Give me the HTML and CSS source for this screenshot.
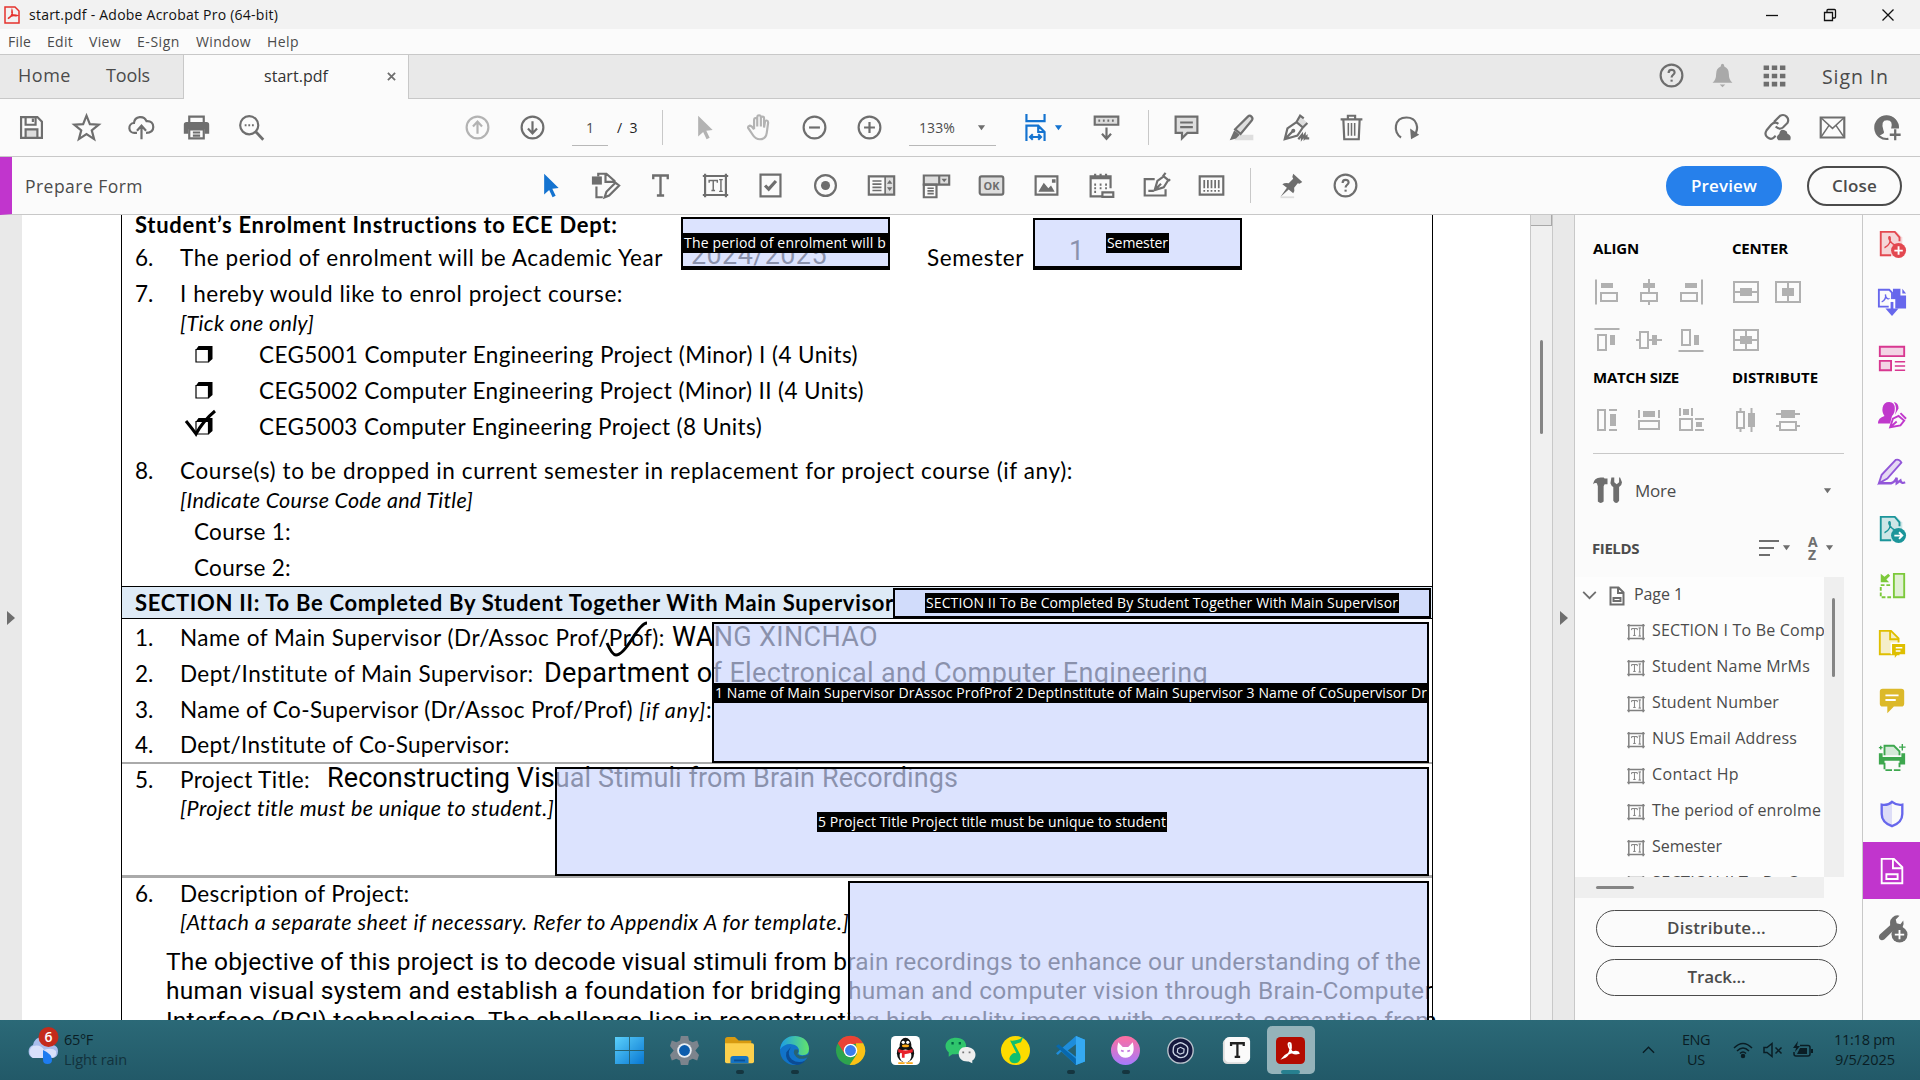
FILE: index.html
```html
<!DOCTYPE html>
<html lang="en">
<head>
<meta charset="utf-8">
<title>start.pdf - Adobe Acrobat Pro (64-bit)</title>
<link rel="stylesheet" href="styles.css">
</head>
<body>
<svg class="sprite" aria-hidden="true">
  <symbol id="help" viewBox="0 0 32 32"><circle cx="16" cy="16" r="12"/><path d="M12.8 13.2c0-4.600 6.600-4.400 6.600-.6 0 2.600-3.300 2.600-3.300 5.600"/><path d="M16.100 20.600v2.200"/></symbol>
  <symbol id="cursor" viewBox="0 0 32 32"><path class="f" d="M9 3v23l5.500-5 3.800 8 3.400-1.600-3.700-7.700 7-.9z"/></symbol>
  <symbol id="caret" viewBox="0 0 10 10"><path class="f" d="M1 2.500h8L5 8z"/></symbol>
  <symbol id="field" viewBox="0 0 32 32"><path d="M4.500 5.500h23v21h-23z"/><path d="M2 5.500h2m24 0h2M2 26.500h2m24 0h2M4.500 3v2m23-2v2m-23 22v2m23-2v2" /><path d="M9 13v-2.500h9V13m-4.500-2.500v11m-2 0h4M20 9.500h4m-4 13h4m-2-13v13" stroke-width="1.600"/></symbol>
  <symbol id="formpage" viewBox="0 0 32 32"><path d="M5 3h13l9 9v17H5z"/><path d="M17 3v10h10"/><path d="M10 19.500h12v5H10z"/></symbol>
  <symbol id="pdf" viewBox="0 0 32 32"><path class="t" d="M4 3h17l6 6v20H4z"/><path d="M24 13V9l-5-6H4v25h11"/><path stroke-width="1.500" d="M8 20c5-2 7-7 6-11-1-2-2 0-1 2 2 4 4 6 8 6"/></symbol>
</svg>

<header class="titlebar">
  <svg class="app" viewBox="0 0 16 19"><path d="M1 1.500h10l4 4v12H1z"/><path d="M4 13c3-1 5-5 4-8-1 4 2 6 5 5-3-1-6 0-9 3z"/></svg>
  <span data-w="249">start.pdf - Adobe Acrobat Pro (64-bit)</span>
  <div class="winbtns">
    <svg viewBox="0 0 14 14"><path d="M1 7.500h12"/></svg>
    <svg viewBox="0 0 14 14"><path d="M1.500 4.500h8v8h-8zM4 4V2.500q0-1 1-1h6.500q1 0 1 1V9q0 1-1 1H10"/></svg>
    <svg viewBox="0 0 14 14"><path d="M1.500 1.500l11 11m0-11l-11 11"/></svg>
  </div>
</header>
<nav class="menubar"><span data-w="23">File</span><span data-w="26">Edit</span><span data-w="32">View</span><span data-w="43">E-Sign</span><span data-w="55">Window</span><span data-w="32">Help</span></nav>

<div class="tabs">
  <div class="hometabs"><span data-w="53">Home</span><span data-w="44">Tools</span></div>
  <div class="tab"><span data-w="64">start.pdf</span><svg viewBox="0 0 10 10"><path d="M1 1l8 8m0-8L1 9"/></svg></div>
  <div class="account">
    <svg class="ic"><use href="#help"/></svg>
    <svg class="ic bell" viewBox="0 0 32 32"><path class="f" d="M16 3q2 0 2 3 5 2 5 8 0 7 4 10H5q4-3 4-10 0-6 5-8 0-3 2-3zM13 26h6l-3 3z"/></svg>
    <svg class="ic" viewBox="0 0 32 32"><path class="f" d="M4 5h6v5H4zm9 0h6v5h-6zm9 0h6v5h-6zM4 14h6v5H4zm9 0h6v5h-6zm9 0h6v5h-6zM4 23h6v5H4zm9 0h6v5h-6zm9 0h6v5h-6z"/></svg>
    <span data-w="67">Sign In</span>
  </div>
</div>

<div class="toolbar">
  <div class="group files">
    <svg class="ic" viewBox="0 0 32 32"><path d="M4.500 4.500h18l5 5v18h-23z"/><path d="M9.500 5v8h11V5m-3 1v4"/><path class="t s" d="M9.500 27v-9h13v9"/></svg>
    <svg class="ic" viewBox="0 0 32 32"><path d="M16 3l3.700 9.300 9.800.5-7.700 6.300 2.600 9.700L16 23.300l-8.400 5.500 2.600-9.700-7.700-6.300 9.800-.5z"/></svg>
    <svg class="ic" viewBox="0 0 32 32"><path d="M11 22H8.500a5.500 5.500 0 0 1-.8-11C8.500 3 19 2.500 21.500 9c5-.5 7.500 2.500 7.500 6.500S26 22 21 22M16 29V14m-5 5.500l5-5.500 5 5.500"/></svg>
    <svg class="ic" viewBox="0 0 32 32"><path d="M8 10V4h16v6"/><path class="f" d="M5 10h22q3 0 3 3v10h-5v-5H7v5H2V13q0-3 3-3z"/><path d="M8 18h16v10H8zM12 21.500h8m-8 3.500h8"/></svg>
    <svg class="ic" viewBox="0 0 32 32"><circle cx="13.500" cy="13.500" r="10"/><path d="M21 21l8 8.500" stroke-width="3"/><path d="M8.500 13.500h2m2 0h2m2 0h2"/></svg>
  </div>
  <div class="group nav">
    <svg class="ic dim" viewBox="0 0 32 32"><circle cx="16" cy="16" r="12"/><path d="M16 23V10m-5 5l5-5.500 5 5.500"/></svg>
    <svg class="ic" viewBox="0 0 32 32"><circle cx="16" cy="16" r="12"/><path d="M16 9v13m-5-5l5 5.500 5-5.500"/></svg>
    <span class="pageno">1</span><span class="pages">/&nbsp; 3</span>
  </div>
  <div class="group view">
    <svg class="ic dim"><use href="#cursor"/></svg>
    <svg class="ic dim" viewBox="0 0 32 32"><path d="M10 18V8q0-2.500 1.800-2.500T13.500 8v7V5q0-2.500 2-2.500t2 2.500v10V6q0-2 1.800-2T21 6v10l1-6q.3-2 2-1.700t1.500 2.700l-1.500 11q-1 7-7.500 7-5 0-8-5l-5-7.500q-.5-2 1.500-2.500 2-.2 5 4"/></svg>
    <svg class="ic" viewBox="0 0 32 32"><circle cx="16" cy="16" r="12"/><path d="M10 16h12"/></svg>
    <svg class="ic" viewBox="0 0 32 32"><circle cx="16" cy="16" r="12"/><path d="M10 16h12M16 10v12"/></svg>
  </div>
  <div class="zoombox"><span data-w="36">133%</span><svg class="caret"><use href="#caret"/></svg></div>
  <div class="fit">
    <svg class="ic blue" viewBox="0 0 32 32"><path d="M6 1v8h20V1M6 31V14h13l7 7v10M19 14v7h7M10 26.500h12m-9-3l-3 3 3 3m6-6l3 3-3 3"/></svg>
    <svg class="caret blue"><use href="#caret"/></svg>
  </div>
  <svg class="ic kb" viewBox="0 0 32 32"><path class="t s" d="M3 4h26v9H3z"/><path d="M7 8.500h2m3 0h2m3 0h2m3 0h2M16 16v12m-5-5l5 5.500 5-5.500"/></svg>
  <div class="group notes">
    <svg class="ic" viewBox="0 0 32 32"><path class="t s" d="M4 4h24v18H17l-6 6v-6H4z"/><path d="M9 10.500h14M9 15.500h14"/></svg>
    <svg class="ic" viewBox="0 0 32 32"><path class="t" d="M12 24h17v6H8z"/><path class="t s" d="M9 18L23 4q2-2 4 0t.5 4L15 23z"/><path class="f" d="M8 19l6 5-4 4-7 2z"/></svg>
    <svg class="ic" viewBox="0 0 32 32"><path d="M3 29l3-12 10-7 7 6-6 9zl9-9M16 10l4-7 4 3"/><path class="t" d="M20 3l8 8-5 5-7-6z"/><path d="M23 16l5-5"/><circle class="f" cx="12.500" cy="19.500" r="2.200"/><path d="M18 29l4-5v4l3-4v4l2-2v2h3"/></svg>
    <svg class="ic" viewBox="0 0 32 32"><path d="M4 7h24M12 7V3h8v4M7 7l1 22h16l1-22"/><path stroke-width="1.700" d="M12.500 11v14m3.500-14v14m3.500-14v14"/></svg>
    <svg class="ic" viewBox="0 0 32 32"><path d="M10 27C1 22 2 5 16 5c12 0 14 12 9 19"/><path class="f" d="M20 17l1 12 9-5z"/></svg>
  </div>
  <div class="group share">
    <svg class="ic" viewBox="0 0 32 32"><path d="M12 10l7-7q4-2 7 1t1 7l-5 5q-4 3-8-1M17 12q-4-3-8 1l-5 6q-3 5 1 8t7 0l2-2"/><path class="f" d="M17 30q-4-3 1-7 1-6 6-4 3 1 3 4 5 2 3 7z"/></svg>
    <svg class="ic" viewBox="0 0 32 32"><path d="M3 5h26v22H3z"/><path stroke-width="1.600" d="M3 5l13 12L29 5M3 27l9-13m17 13l-9-13"/></svg>
    <svg class="ic" viewBox="0 0 32 32"><path d="M27.500 17A12.500 12.500 0 1 0 17 28.500"/><path class="f" d="M15 3A12.500 12.500 0 0 0 7 25l4-2q2-1 .5-4Q8 8 15.500 8q7 0 4.500 9h7Q28 4 15 3z"/><path d="M24.500 18v12m-6-6h12" stroke-width="2.500"/></svg>
  </div>
</div>

<div class="formbar">
  <h1><span data-w="118">Prepare Form</span></h1>
  <div class="tools">
    <svg class="ic blue"><use href="#cursor"/></svg>
    <svg class="ic" viewBox="0 0 32 32"><path d="M8 6V3h9l9 8v3M16 3v9h9M6 17v12h7M15 29l2-6 10-10 4 3-11 11z"/><path class="f" d="M1 6h11v9H1z"/></svg>
    <svg class="ic" viewBox="0 0 32 32"><path d="M8 9V5h16v4M16 5v22m-4 0h8" stroke-width="2.600"/></svg>
    <svg class="ic"><use href="#field"/></svg>
    <svg class="ic" viewBox="0 0 32 32"><path d="M5 4h22v24H5z"/><path d="M10 16l4 4 8-9" stroke-width="3.500"/></svg>
    <svg class="ic" viewBox="0 0 32 32"><circle cx="16" cy="16" r="11.500"/><circle class="f" cx="16" cy="16" r="5"/></svg>
    <svg class="ic" viewBox="0 0 32 32"><path d="M2 6h28v20H2z"/><path class="t" d="M20 6h10v20H20z"/><path d="M20 6v20M6 11h10M6 14.500h10M6 18h10M6 21.500h10" stroke-width="1.800"/><path class="f" d="M22 14l3-4 3 4zm0 4h6l-3 4z"/></svg>
    <svg class="ic" viewBox="0 0 32 32"><path class="t s" d="M2 5h28v10H2z"/><path d="M2 15h14v14H2zM19 5v10"/><path d="M6 19h7M6 22h7M6 25h7" stroke-width="1.800"/><path class="f" d="M21.500 8.500h6l-3 4z"/></svg>
    <svg class="ic ok" viewBox="0 0 32 32"><rect class="t s" x="3" y="6" width="26" height="20" rx="2"/><text x="16" y="20.500" text-anchor="middle">OK</text></svg>
    <svg class="ic" viewBox="0 0 32 32"><path d="M4 6h24v20H4z"/><path class="f" d="M7 23l6-10 5 6 3-3 4 7zM22 9h4v4h-4z"/></svg>
    <svg class="ic" viewBox="0 0 32 32"><path d="M16 28H4V6h22v13M4 8h22M9 3v3m6-3v3m6-3v3M17 23.500h12v5H17z"/><path d="M8 15h2m4 0h2m4 0h2M8 19h2m4 0h2m4 0h2M8 23h2"/></svg>
    <svg class="ic" viewBox="0 0 32 32"><path d="M14 9H3v18h23v-7M7 22h6"/><path d="M14 21l3-10 7-5 5 4-5 8zl7-7M23 6l3-4m3 9l2-2"/></svg>
    <svg class="ic" viewBox="0 0 32 32"><path d="M3 6h26v20H3z"/><path stroke-width="1.900" d="M8 10v9m4-9v9m4-9v9m4-9v9m4-9v9M8 21v2m4-2v2m4-2v2m4-2v2m4-2v2"/></svg>
  </div>
  <div class="tools extra">
    <svg class="ic" viewBox="0 0 32 32"><path class="f" d="M19 3l10 9-3 2-2-.5-4 5q1 4-1 6l-5-4-9 8 7-10-5-4q3-2 7-1l5-5-1-2z"/><path class="t" d="M5 28h15v2H5z"/></svg>
    <svg class="ic"><use href="#help"/></svg>
  </div>
  <div class="actions"><button class="primary"><span data-w="66">Preview</span></button><button><span data-w="45">Close</span></button></div>
</div>

<main class="workspace">
  <div class="gutter"><i class="tri"></i></div>
  <section class="page">
    <div class="sheet">
      <p class="ln t0"><b data-w="483">Student’s Enrolment Instructions to ECE Dept:</b></p>
      <p class="ln h41"><i class="n">6.</i><span class="lab w746"><span data-w="483">The period of enrolment will be Academic Year</span></span><span data-w="97">Semester</span></p>
      <p class="ln h31"><i class="n">7.</i><span data-w="443">I hereby would like to enrol project course:</span></p>
      <p class="ln h28 in"><em data-w="134">[Tick one only]</em></p>
      <p class="ln h35 opt"><svg class="box" viewBox="0 0 18 18"><path d="M1 4.500h12.500V17H1z"/><path class="f" d="M1 4.500L3.500 1h14v13L14 17V4.500z"/></svg><span data-w="599">CEG5001 Computer Engineering Project (Minor) I (4 Units)</span></p>
      <p class="ln h37 opt"><svg class="box" viewBox="0 0 18 18"><path d="M1 4.500h12.500V17H1z"/><path class="f" d="M1 4.500L3.500 1h14v13L14 17V4.500z"/></svg><span data-w="605">CEG5002 Computer Engineering Project (Minor) II (4 Units)</span></p>
      <p class="ln h35 opt"><svg class="box" viewBox="0 0 18 18"><path d="M1 4.500h12.500V17H1z"/><path class="f" d="M1 4.500L3.500 1h14v13L14 17V4.500z"/></svg><span data-w="503">CEG5003 Computer Engineering Project (8 Units)</span></p>
      <p class="ln h35 gap9"><i class="n">8.</i><span data-w="893">Course(s) to be dropped in current semester in replacement for project course (if any):</span></p>
      <p class="ln h24 in"><em data-w="293">[Indicate Course Code and Title]</em></p>
      <p class="ln h39 course"><span data-w="97">Course 1:</span></p>
      <p class="ln h33 course"><span data-w="97">Course 2:</span></p>
      <h2 class="ln"><b data-w="759">SECTION II: To Be Completed By Student Together With Main Supervisor</b></h2>
      <p class="ln h37"><i class="n">1.</i><span class="lab w492"><span data-w="485">Name of Main Supervisor (Dr/Assoc Prof/Prof):</span></span><span class="entry" data-w="206">WANG XINCHAO</span></p>
      <p class="ln h35"><i class="n">2.</i><span class="lab w364"><span data-w="354">Dept/Institute of Main Supervisor:</span></span><span class="entry" data-w="664">Department of Electronical and Computer Engineering</span></p>
      <p class="ln h37"><i class="n">3.</i><span class="lab w458"><span data-w="453">Name of Co-Supervisor (Dr/Assoc Prof/Prof)</span></span><em data-w="67">[if any]</em>:</p>
      <p class="ln h33"><i class="n">4.</i><span data-w="330">Dept/Institute of Co-Supervisor:</span></p>
      <hr class="r2">
      <p class="ln h31"><i class="n">5.</i><span class="lab w146"><span data-w="130">Project Title:</span></span><span class="entry up1" data-w="631">Reconstructing Visual Stimuli from Brain Recordings</span></p>
      <p class="ln h26 in"><em data-w="374">[Project title must be unique to student.]</em></p>
      <hr class="r3">
      <p class="ln h31"><i class="n">6.</i><span data-w="230">Description of Project:</span></p>
      <p class="ln h26 in"><em data-w="668">[Attach a separate sheet if necessary. Refer to Appendix A for template.]</em></p>
      <div class="essay">
        <span data-w="1255">The objective of this project is to decode visual stimuli from brain recordings to enhance our understanding of the</span>
        <span data-w="1267">human visual system and establish a foundation for bridging human and computer vision through Brain-Computer</span>
        <span data-w="1271">Interface (BCI) technologies. The challenge lies in reconstructing high-quality images with accurate semantics from</span>
      </div>
    </div>
    <svg class="ink i1" viewBox="0 0 34 28"><path d="M2 12q8 10 10 13Q19 12 31 2"/></svg>
    <svg class="ink i2" viewBox="0 0 44 36"><path d="M2 22q5 12 9 12Q17 34 27 18T42 2"/></svg>
    <span class="ans a1"><span data-w="136">2024/2025</span></span><span class="ans a2">1</span>
    <div class="fld f1"><span class="band"><span data-w="202">The period of enrolment will b</span></span></div>
    <div class="fld f2"><span class="tag"><span data-w="61">Semester</span></span></div>
    <div class="fld f3"><span class="tag"><span data-w="472">SECTION II To Be Completed By Student Together With Main Supervisor</span></span></div>
    <div class="fld f4"><span class="band"><span data-w="712">1 Name of Main Supervisor DrAssoc ProfProf 2 DeptInstitute of Main Supervisor 3 Name of CoSupervisor Dr</span></span></div>
    <div class="fld f5"><span class="tag"><span data-w="348">5 Project Title Project title must be unique to student</span></span></div>
    <div class="fld f6"></div>
  </section>
  <div class="vscroll"><i></i></div>
  <div class="gutter right"><i class="tri"></i></div>

  <aside class="panel">
    <div class="arrange">
      <h3><span data-w="46">ALIGN</span></h3><h3><span data-w="56">CENTER</span></h3>
      <div class="row">
        <svg viewBox="0 0 28 28"><path d="M3 1.500v25M8 15h16v8H8z"/><path class="f" d="M8 5h12v5H8z"/></svg>
        <svg viewBox="0 0 28 28"><path d="M14 1v14m0 8v4M6 15h16v8H6z"/><path class="f" d="M8 5h12v5H8z"/></svg>
        <svg viewBox="0 0 28 28"><path d="M25 1.500v25M4 15h16v8H4z"/><path class="f" d="M8 5h12v5H8z"/></svg>
      </div>
      <div class="row">
        <svg viewBox="0 0 28 28"><path d="M2 4h24v20H2zM2 14h24"/><path class="f" d="M8 10h12v8H8z"/></svg>
        <svg viewBox="0 0 28 28"><path d="M2 4h24v20H2zM14 4v20"/><path class="f" d="M8 10h12v8H8z"/></svg>
      </div>
      <div class="row">
        <svg viewBox="0 0 28 28"><path d="M1.500 3h25M5 9h8v15H5z"/><path class="f" d="M17 9h5v10h-5z"/></svg>
        <svg viewBox="0 0 28 28"><path d="M1 14h4m8 0h14M5 6h8v16H5z"/><path class="f" d="M17 9h5v10h-5z"/></svg>
        <svg viewBox="0 0 28 28"><path d="M1.500 25h25M5 4h8v15H5z"/><path class="f" d="M17 9h5v10h-5z"/></svg>
      </div>
      <div class="row">
        <svg viewBox="0 0 28 28"><path d="M2 4h24v20H2zM2 14h24M14 4v20"/><path class="f" d="M8 10h12v8H8z"/></svg>
      </div>
      <h3 class="m"><span data-w="86">MATCH SIZE</span></h3><h3 class="m"><span data-w="86">DISTRIBUTE</span></h3>
      <div class="row last">
        <svg viewBox="0 0 28 28"><path d="M5 4h7v20H5zM16 4h8m-8 20h8"/><path class="f" d="M17 8h6v12h-6z"/></svg>
        <svg viewBox="0 0 28 28"><path d="M4 15h20v8H4zM4 4v8m20-8v8"/><path class="f" d="M8 5h12v6H8z"/></svg>
        <svg viewBox="0 0 28 28"><path d="M3 13h12v11H3zM3 2v8m12-8v8M18 13h9m-9 11h9"/><path class="f" d="M6 3h6v6H6zM19 16h6v5h-6z"/></svg>
      </div>
      <div class="row last">
        <svg viewBox="0 0 28 28"><path d="M5 6h7v16H5zM8.500 2v4m0 16v4M19.500 2v24"/><path class="f" d="M16 7h7v14h-7z"/></svg>
        <svg viewBox="0 0 28 28"><path d="M6 16h16v8H6zM2 20h4m16 0h4M2 8h24"/><path class="f" d="M7 4h14v8H7z"/></svg>
      </div>
    </div>
    <div class="more">
      <svg class="hammer" viewBox="0 0 30 28"><path class="f" d="M0 8Q1 1 8 1h3l1 1h3v6h-3l-1 2v16q-3 3-6 0V10L4 7Q2 6 0 8zM19 1l-1 6q1 3 3 4v14q3 5 6 0V11q3-2 3-5l-2-5h-1v5l-2.500 2L22 6V1z"/></svg>
      <span data-w="41">More</span><svg class="caret"><use href="#caret"/></svg>
    </div>
    <div class="fieldshead"><h3><span data-w="47">FIELDS</span></h3>
      <svg class="sort" viewBox="0 0 22 18"><path d="M1 2h20M1 9h15M1 16h11"/></svg><svg class="caret"><use href="#caret"/></svg>
      <span class="az"><b>A</b><b>Z</b></span><svg class="caret"><use href="#caret"/></svg></div>
    <div class="tree">
      <div class="list">
        <div class="pg"><svg class="chev" viewBox="0 0 16 10"><path d="M1 1l7 7 7-7"/></svg><svg class="pic" viewBox="0 0 16 20"><path d="M1.500 1.500h8l5 5v12h-13zM9 2v5h5M4.500 12h7v3h-7z"/></svg><span data-w="49">Page 1</span></div>
        <div class="it"><svg><use href="#field"/></svg><span data-w="173">SECTION I To Be Comp</span></div>
        <div class="it"><svg><use href="#field"/></svg><span data-w="158">Student Name MrMs</span></div>
        <div class="it"><svg><use href="#field"/></svg><span data-w="127">Student Number</span></div>
        <div class="it"><svg><use href="#field"/></svg><span data-w="145">NUS Email Address</span></div>
        <div class="it"><svg><use href="#field"/></svg><span data-w="87">Contact Hp</span></div>
        <div class="it"><svg><use href="#field"/></svg><span data-w="169">The period of enrolme</span></div>
        <div class="it"><svg><use href="#field"/></svg><span data-w="70">Semester</span></div>
        <div class="it"><svg><use href="#field"/></svg><span data-w="146">SECTION II To Be C</span></div>
      </div>
      <div class="tv"><i></i></div><div class="th"><i></i></div>
    </div>
    <button><span data-w="99">Distribute...</span></button>
    <button><span data-w="58">Track...</span></button>
  </aside>

  <nav class="rail">
    <a class="red"><svg viewBox="0 0 32 32"><use href="#pdf"/><circle class="f" cx="23" cy="23" r="8"/><path class="w" d="M18.500 23h9M23 18.500v9"/></svg></a>
    <a class="indigo"><svg viewBox="0 0 32 32"><path d="M2 4h11l3 3v15H2z"/><path stroke-width="1.500" d="M5 17c3-1 5-5 4-8 0 3 2 5 5 5"/><path class="f" d="M17 3h8v7h6v14H17zM27 3l4 5h-4z"/><path d="M16 14v14" class="w" stroke-width="7"/><path d="M16 17v10" stroke-width="3"/><path class="f" d="M9 24h14l-7 8z"/></svg></a>
    <a class="pink"><svg viewBox="0 0 32 32"><path class="t s" d="M3 4h26v10H3zM3 19h12v10H3z"/><path stroke-width="1.500" d="M19 20h11m-11 4.500h11M19 29h11"/></svg></a>
    <a class="mag"><svg viewBox="0 0 32 32"><path class="f" d="M1 25q0-6 7-8-3-4-2-9 1-6 7-6t6 7q0 5-3 8l-2 8zM18 2q5 1 5 7l-4 7q3-8-1-14z"/><path d="M14 29l3-9 6-3 6 5-4 5-11 2zl7-6M25 14l6 6"/></svg></a>
    <a class="violet"><svg viewBox="0 0 32 32"><path class="t s" d="M2 28l3-9L20 3q4-1 6 3L11 23z"/><path d="M2 28h13q4-1 6-6v6l4-3q1 4 5 2" stroke-width="2.500"/></svg></a>
    <a class="teal"><svg viewBox="0 0 32 32"><use href="#pdf"/><circle class="f" cx="23" cy="23" r="8"/><path class="w" d="M18.500 23h8m-3-3.500l3.500 3.500-3.500 3.500"/></svg></a>
    <a class="lime"><svg viewBox="0 0 32 32"><path class="t s" d="M18 3h11v25H18z"/><path stroke-dasharray="4 2" d="M14 15H4v13h12"/><path class="f" d="M4 3v9h9l-3-3 4-4-2-2-4 3z"/></svg></a>
    <a class="gold"><svg viewBox="0 0 32 32"><path class="t s" d="M3 3h12l8 8v17H3z"/><path d="M14 3v9h9"/><path class="f" d="M16 17h14v11h-8l-3 4v-4h-3z"/><path class="w" stroke-width="1.500" d="M15.300 28V16.300H30M20 21h7m-7 3.500h5"/></svg></a>
    <a class="gold2"><svg viewBox="0 0 32 32"><path class="f" d="M6 4h20q3 0 3 3v13q0 3-3 3H18l-7 7v-7H6q-3 0-3-3V7q0-3 3-3z"/><path class="w" d="M9 11h14M9 16h11"/></svg></a>
    <a class="green"><svg viewBox="0 0 32 32"><path class="t s" d="M8 14V4h10l6 6v4"/><path class="f" d="M2 12h4v4h20v-4h4v12H24v-4H8v4H2z"/><path d="M8 22v8h16v-8" stroke-dasharray="7 2"/><path stroke-width="1.500" d="M27 2v7m-3.500-3.500h7M4 4v4M2 6h4"/></svg></a>
    <a class="indigo"><svg viewBox="0 0 32 32"><path class="t" d="M16 3v26Q5 24 5 16V6q7 1 11-3z"/><path d="M16 3q5 4 11 3v10q0 9-11 13Q5 25 5 16V6q7 1 11-3z" stroke-width="2.500"/></svg></a>
    <a class="active"><svg><use href="#formpage"/></svg></a>
    <a class="grey"><svg viewBox="0 0 32 32"><path class="f" d="M3 23L14 13q-1-7 5-10 3-1 5 0l-4 4 1 4 4 1 3-4q2 8-6 10h-4L8 28q-3 2-5 0t0-5z"/><circle class="f" cx="24" cy="23" r="8.500"/><path class="w" d="M19 23h10m-5-5v10"/></svg></a>
  </nav>
</main>

<footer class="taskbar">
  <div class="weather">
    <svg viewBox="0 0 36 38"><path fill="#a9bdec" d="M8 31a7 7 0 0 1 0-13q2-9 11-8 7 1 9 8 5 1 5 6 0 7-6 7z"/><path fill="#d8e0fa" d="M8 31a7 7 0 0 1 0-12q8-2 11 4 8-3 12 1 1 7-5 7z"/><path fill="#1e7cf0" d="M18 23q9 4 9 10 0 4-4.500 4T18 33z"/><circle cx="23.500" cy="10" r="10" fill="#c42b1c"/><text x="23.500" y="15" text-anchor="middle">6</text></svg>
    <div><span data-w="29">65°F</span><span class="soft" data-w="63">Light rain</span></div>
  </div>
  <div class="apps">
    <a><svg viewBox="0 0 32 32"><defs><linearGradient id="wg" x2="1" y2="1"><stop stop-color="#5bd0fb"/><stop offset="1" stop-color="#0877d2"/></linearGradient></defs><path fill="url(#wg)" d="M0 1h15.500v14.500H0zm16.500 0H32v14.500H16.500zM0 16.500h15.500V31H0zm16.500 0H32V31H16.500z"/></svg></a>
    <a><svg viewBox="0 0 32 32"><path fill="#7c848d" d="M12 0h8l1 5 4 2 5-2 2 6-4 5 4 5-2 6-5-2-4 2-1 5h-8l-1-5-4-2-5 2-2-6 4-5-4-5 2-6 5 2 4-2z"/><circle cx="16" cy="16" r="8" fill="#e8eef4"/><circle cx="16" cy="16" r="6" fill="#0b5cad"/></svg></a>
    <a class="run"><svg viewBox="0 0 32 32"><path fill="#d79a10" d="M0 4q0-3 3-3h8l4 4h14v7H0z"/><path fill="#fcd04d" d="M0 8h30q2 0 2 2v18q0 2-2 2H2q-2 0-2-2z"/><path fill="#1574c4" d="M6 30v-5q0-3 3-3h14q3 0 3 3v5z"/><path fill="#0a4f93" d="M10 26h12v2H10z"/></svg></a>
    <a class="run"><svg viewBox="0 0 32 32"><defs><linearGradient id="eg" x2="1"><stop stop-color="#1c9de8"/><stop offset="1" stop-color="#63e36b"/></linearGradient></defs><circle cx="16" cy="16" r="16" fill="#1173c9"/><path fill="url(#eg)" d="M0 15Q2 0 17 0q14 1 15 14 0 8-9 7-4-1-2-4 0-7-8-8Q5 8 0 15z"/><path fill="#0b4c94" d="M12 12q-5 8 1 14 7 5 15 1-6 7-14 4Q5 27 7 18z"/><path fill="#286372" d="M20 15q1 3-1 5 4 4 13 0l0 2q-4 4-11 3-8-4-5-10z"/></svg></a>
    <a><svg viewBox="0 0 32 32"><circle cx="16" cy="16" r="16" fill="#2da44e"/><path fill="#ea4335" d="M2 8a16 16 0 0 1 28 0l-14 1-6 11z"/><path fill="#fbc116" d="M30 8a16 16 0 0 1-15 24l8-12-1-12z"/><circle cx="16" cy="16" r="7.500" fill="#fff"/><circle cx="16" cy="16" r="6" fill="#3b7ded"/></svg></a>
    <a><svg viewBox="0 0 32 32"><rect width="32" height="32" rx="5" fill="#fff"/><ellipse cx="16" cy="19" rx="9.500" ry="10" fill="#111"/><ellipse cx="16" cy="10" rx="6.500" ry="8" fill="#111"/><ellipse cx="16" cy="22" rx="6.500" ry="7" fill="#fff"/><path fill="#e8212b" d="M8 14q8 4 16 0v4q-5 2-9 2v4h-3v-5l-4-1z"/><ellipse cx="16" cy="11" rx="4" ry="1.500" fill="#fba919"/><circle cx="13.500" cy="7" r="1.800" fill="#fff"/><circle cx="18.500" cy="7" r="1.800" fill="#fff"/><path fill="#fba919" d="M8 29h7v2H8zm9 0h7v2h-7z"/></svg></a>
    <a><svg viewBox="0 0 32 32"><path fill="#2fc56c" d="M11 2c15 0 15 18 0 18l-4 0-4 3v-5C-4 12 0 2 11 2z"/><path fill="#eee" d="M22 12c12 0 13 12 7 15v3l-4-2c-14 1-14-16-3-16z"/><path stroke="#064" stroke-width="2.500" d="M6 8h2.500M14 8h2.500"/><path stroke="#777" stroke-width="2" d="M18 18h2m5 0h2"/></svg></a>
    <a><svg viewBox="0 0 32 32"><circle cx="16" cy="16" r="16" fill="#fddc00"/><path fill="#0fbf6d" d="M25 0l-3 7-7 2 6 11q2 6-2 9-4 2-8 0-4-5 1-9 2-2 5-1L10 5q10 1 15-5z"/></svg></a>
    <a class="run"><svg viewBox="0 0 32 32"><path fill="#1e8ddb" d="M22 0l10 4v24l-10 4L6 17l-4 4-2-2 22-19zm0 9l-9 7 9 7z" fill-rule="evenodd"/><path fill="#0868ad" d="M0 11l3-2 19 16v7z"/><path fill="#35a9f2" d="M22 0l10 4v24l-10 4z"/></svg></a>
    <a class="run"><svg viewBox="0 0 32 32"><defs><linearGradient id="cg" x2="0" y2="1"><stop stop-color="#ff6f9f"/><stop offset="1" stop-color="#a67bff"/></linearGradient></defs><circle cx="16" cy="16" r="16" fill="url(#cg)"/><path fill="#fff" d="M8 7l5 5h6l5-5q2 8 0 12-3 5-8 5t-8-5Q6 15 8 7z"/><path stroke="#c77be0" stroke-width="2" d="M11 16l3 1m7-1l-3 1"/></svg></a>
    <a><svg viewBox="0 0 32 32"><circle cx="16" cy="16" r="14" fill="#15193f" stroke="#b9c3cc" stroke-width="1.500"/><path fill="none" stroke="#cdd6e6" stroke-width="1.500" d="M12 9q4-3 8 0 5 2 4 7 0 5-4 7-5 2-8-1-5-2-4-7 0-5 4-6z"/><path fill="none" stroke="#cdd6e6" stroke-width="1.300" d="M13 14l3-1.500 4 2-.5 4-4 1.500-3-2z"/></svg></a>
    <a><svg viewBox="0 0 32 32"><rect x="1" y="3" width="28" height="28" rx="5" fill="#ddd"/><rect x="3" y="1" width="28" height="28" rx="5" fill="#fafafa"/><path fill="none" stroke="#222" stroke-width="2.500" d="M10 11V8h14v3M17 8v15m-3 0h6"/></svg></a>
    <a class="cur"><svg viewBox="0 0 32 32"><rect y="1" width="32" height="30" rx="5" fill="#b30b00"/><path fill="none" stroke="#fff" stroke-width="2" d="M8 24c6-2 10-10 8-16-3-2-3 3 0 7 2 5 5 5 9 4 0-3-11-2-17 5z"/></svg></a>
  </div>
  <div class="tray">
    <svg class="up" viewBox="0 0 14 8"><path d="M1 7l6-6 6 6"/></svg>
    <div class="st"><span data-w="28">ENG</span><span data-w="18">US</span></div>
    <svg class="wifi" viewBox="0 0 20 16"><path d="M1 6q9-9 18 0M4 9q6-6 12 0M7 11.500q3-3 6 0"/><circle cx="10" cy="14" r="1.500" fill="#0a1d24"/></svg>
    <svg class="spk" viewBox="0 0 20 16"><path d="M1 5.500h3L9 1.500v13L4 10.500H1zM12.500 5.500l6 6m0-6l-6 6"/></svg>
    <svg class="bat" viewBox="0 0 20 18"><path d="M7 4.500h8q2 0 2 2V13q0 2-2 2H3q-2 0-2-2v-2"/><path class="f" d="M18 8h2v4h-2zM4 13l3-6h7v6zM5 0L0 7h3l-1 4 5-6H4z"/></svg>
    <div class="st end"><span data-w="61">11:18 pm</span><span data-w="60">9/5/2025</span></div>
  </div>
</footer>
<script src="script.js"></script>
</body>
</html>
```
FILE: styles.css
```css
* { box-sizing: border-box; }
html, body { margin: 0; height: 1080px; overflow: hidden; }
body { display: flex; flex-direction: column; width: 1920px; background: #fbfbfb; color: #4b4b4b; font-family: "Open Sans", "Noto Sans", sans-serif; font-size: 14px; }
svg { fill: none; stroke: currentColor; stroke-width: 2; flex: none; display: block; overflow: visible; }
.f { fill: currentColor; stroke: none; }
.t { fill: currentColor; fill-opacity: .2; stroke: none; }
.t.s { stroke: currentColor; }
.w { stroke: #fff; }
.sprite { width: 0; height: 0; position: absolute; }
span[data-w], b[data-w], em[data-w] { white-space: nowrap; }
h1, h2, h3, p { margin: 0; font-weight: 400; }
button { font: inherit; font-weight: 600; font-size: 17px; color: #4b4b4b; background: none; border: 2px solid #4b4b4b; border-radius: 20px; padding: 0; display: flex; align-items: center; justify-content: center; }
.ic { width: 29px; height: 29px; color: #6e6e6e; stroke-width: 2.4; }
.ok text { fill: currentColor; stroke: none; font-size: 12px; font-weight: 700; }
.dim { color: #b3b3b3; }
.blue { color: #1473d0; }
.caret { width: 9px; height: 9px; color: #6e6e6e; }
.caret.blue { color: #1473d0; }

.titlebar { height: 29px; background: #f2f2f2; display: flex; align-items: center; padding-left: 4px; color: #111; font-size: 14px; }
.app { width: 16px; height: 20px; color: #e5322d; margin-right: 9px; stroke-width: 1.5; }
.winbtns { margin-left: auto; display: flex; gap: 44px; padding-right: 25px; color: #111; }
.winbtns svg { width: 14px; height: 14px; stroke-width: 1.3; }
.menubar { height: 25px; display: flex; gap: 16px; padding: 0 8px; align-items: center; line-height: 25px; }

.tabs { height: 45px; background: #e9e9e9; border-top: 1px solid #c8c8c8; border-bottom: 1px solid #c8c8c8; display: flex; font-size: 18px; }
.hometabs { width: 183px; padding: 0 0 3px 18px; display: flex; gap: 35px; align-items: center; }
.tab { width: 226px; height: 44px; background: #fbfbfb; border: solid #c8c8c8; border-width: 0 1px; display: flex; align-items: center; justify-content: flex-end; padding: 0 12px 2px 0; gap: 59px; font-size: 16px; color: #323232; }
.tab svg { width: 9px; height: 9px; stroke-width: 2; color: #6e6e6e; }
.account { margin-left: auto; display: flex; align-items: center; gap: 22.500px; padding: 0 31px 2px 0; }
.account > span { margin-left: 11px; margin-top: 2px; font-size: 19.500px; }
.bell { color: #a9a9a9; }

.toolbar { height: 58px; border-bottom: 1px solid #c8c8c8; display: flex; align-items: center; }
.group { display: flex; gap: 26px; align-items: center; }
.files { padding-left: 17px; width: 463px; }
.nav { width: 200px; height: 35px; border-right: 1px solid #c8c8c8; }
.pageno { width: 36px; height: 36px; border-bottom: 1px solid #b8b8b8; text-align: center; line-height: 36px; margin-left: -1px; }
.pages { margin-left: -17px; color: #222; }
.view { padding-left: 27px; width: 246px; }
.zoombox { width: 87px; height: 36px; border-bottom: 1px solid #b8b8b8; display: flex; align-items: center; justify-content: space-between; padding: 0 10px; }
.fit { display: flex; align-items: center; gap: 4px; margin-left: 25px; width: 71px; }
.notes { margin-left: 27px; padding-left: 23px; height: 35px; border-left: 1px solid #c8c8c8; }
.share { margin-left: auto; padding-right: 18px; }

.formbar { height: 58px; border-bottom: 1px solid #c8c8c8; border-left: 12px solid #c135cd; display: flex; align-items: center; }
.formbar h1 { width: 524px; padding-left: 13px; font-size: 17.500px; }
.tools { display: flex; gap: 26.100px; }
.extra { margin-left: 24px; padding-left: 25px; border-left: 1px solid #c8c8c8; height: 35px; align-items: center; }
.actions { margin-left: auto; display: flex; gap: 25px; padding-right: 18px; }
.actions button { width: 95px; height: 40px; }
.actions .primary { width: 116px; background: #2680eb; border-color: #2680eb; color: #fff; }

.workspace { height: 805px; display: flex; overflow: hidden; }
.gutter { width: 22px; background: #e9e9e9; display: flex; align-items: center; justify-content: center; }
.gutter.right { border: solid #c8c8c8; border-width: 0 1px; width: 23px; }
.tri { border: solid transparent; border-width: 7px 0 7px 8px; border-left-color: #6e6e6e; }
.page { width: 1508px; background: #fff; position: relative; color: #000; font-family: Lato, "Open Sans", sans-serif; font-size: 22.500px; overflow: hidden; }
.sheet { margin-left: 99px; width: 1312px; height: 810px; border: solid #000; border-width: 0 1px; }
.ln { padding-left: 13px; white-space: nowrap; height: var(--h); line-height: var(--h); }
.ln b { font-weight: 700; font-size: 22px; }
.ln em { font-size: 21.500px; }
.n { display: inline-block; width: 45px; font-style: normal; }
.in { padding-left: 58px; }
.t0 { --h: 25px; margin-top: -3px; }
.h24 { --h: 24px; } .h26 { --h: 26px; } .h28 { --h: 28px; } .h31 { --h: 31px; } .h33 { --h: 33px; }
.h35 { --h: 35px; } .h37 { --h: 37px; } .h39 { --h: 39px; } .h41 { --h: 41px; }
.gap9 { margin-top: 9px; }
.opt { display: flex; align-items: center; padding-left: 73px; }
.box { width: 18px; height: 18px; margin: -2px 46px 0 0; stroke-width: 1.200; }
.course { padding-left: 72px; }
h2.ln { --h: 31px; height: 33px; margin-top: 2px; border: solid #000; border-width: 1px 0; background: #deeaf6; font-size: inherit; }
.lab { display: inline-block; }
.w746 { width: 747px; } .w492 { width: 492px; } .w364 { width: 364px; } .w458 { width: 459px; } .w146 { width: 147px; }
.entry { font-family: Roboto, sans-serif; font-size: 27px; line-height: 0; }
.up1 { vertical-align: 1px; }
hr { margin: 0; border: 0; background: #aaa; }
.r2 { height: 2px; margin-top: 1px; }
.r3 { height: 3px; margin-top: 54px; }
.essay { font-family: Roboto, sans-serif; font-size: 24.500px; line-height: 29.400px; padding: 12px 0 0 44px; }
.essay span { display: block; width: max-content; }
.ink { position: absolute; stroke-width: 3; }
.i1 { left: 162px; top: 194px; width: 34px; height: 28px; }
.i2 { left: 583px; top: 406px; width: 44px; height: 36px; }
.ans { position: absolute; font-family: Roboto, sans-serif; font-size: 27px; line-height: 30px; }
.a1 { left: 669px; top: 25px; }
.a2 { left: 1047px; top: 21px; }
.fld { position: absolute; border: 2px solid #000; background: rgba(204, 213, 254, .68); display: flex; align-items: center; justify-content: center; font-family: "Open Sans", sans-serif; font-size: 14px; line-height: 20px; color: #fff; }
.band { background: #000; width: 100%; padding-left: 1px; overflow: hidden; white-space: nowrap; }
.tag { background: #000; padding: 0 1px; }
.f1 { left: 659px; top: 2px; width: 209px; height: 53px; border-bottom-width: 4px; }
.f2 { left: 1011px; top: 3px; width: 209px; height: 52px; border-bottom-width: 4px; }
.f3 { left: 871px; top: 373px; width: 538px; height: 30px; }
.f4 { left: 690px; top: 407px; width: 717px; height: 141px; }
.f5 { left: 533px; top: 552px; width: 874px; height: 109px; }
.f6 { left: 826px; top: 666px; width: 581px; height: 160px; }

.vscroll { width: 22px; border-left: 1px solid #c8c8c8; background: #f0f0f0; }
.vscroll::before { content: ""; display: block; height: 10px; background: #e3e3e3; border: solid #a8a8a8; border-width: 0 1px 1px 0; }
.vscroll i { display: block; margin: 114px auto 0; width: 3px; height: 94px; border-radius: 2px; background: #858585; }

.panel { width: 287px; display: flex; flex-direction: column; background: #fbfbfb; }
.arrange { display: grid; grid-template-columns: 139px auto; margin: 0 18px; height: 239px; border-bottom: 1px solid #c8c8c8; grid-template-rows: 48px 48px 48px 36px 58px; align-items: center; }
.arrange h3, .fieldshead h3 { font-weight: 700; font-size: 15px; color: #000; }
.arrange > h3:not(.m) { padding-top: 18px; }
.arrange > .row { padding-top: 10px; }
.arrange > .last { padding: 0 0 8px; }
.row { display: flex; gap: 14px; color: #b1b1b1; }
.row svg { width: 28px; height: 28px; }
.more { display: flex; align-items: center; height: 74px; padding: 0 30px 2px 18px; font-size: 17px; }
.hammer { width: 29px; height: 28px; color: #6e6e6e; margin-right: 13px; }
.more .caret { margin-left: auto; }
.fieldshead { display: flex; align-items: center; height: 49px; padding: 10px 28px 20px 17px; }
.fieldshead h3 { color: #4b4b4b; width: 167px; font-size: 15px; }
.sort { width: 22px; height: 18px; color: #6e6e6e; margin-right: 2px; }
.az { display: flex; flex-direction: column; line-height: 13px; font-size: 14px; color: #6e6e6e; margin: 0 7px 0 17px; width: 10px; }
.tree { height: 321px; display: grid; grid-template-columns: 249px 20px; grid-template-rows: 300px 21px; }
.list { overflow: hidden; background: #fdfdfd; font-size: 16px; }
.list span { margin-top: -4px; }
.pg { display: flex; align-items: center; height: 37px; padding-left: 7px; }
.chev { width: 15px; height: 9px; color: #6e6e6e; margin-right: 12px; }
.pic { width: 16px; height: 20px; color: #6e6e6e; margin-right: 9px; }
.it { display: flex; align-items: center; height: 36px; padding-left: 51px; gap: 6px; }
.it svg { width: 20px; height: 20px; color: #808080; stroke-width: 2.400; }
.tv, .th { background: #efefef; }
.tv i { display: block; margin: 21px 0 0 8px; width: 3px; height: 79px; background: #858585; border-radius: 2px; }
.th i { display: block; margin: 9px 0 0 21px; width: 38px; height: 3px; background: #858585; border-radius: 2px; }
.panel > button { height: 37px; width: 241px; margin: 12px 0 0 21px; padding-bottom: 2px; border-width: 1.500px; flex: none; }
.panel > button + button { margin-top: 12px; }

.rail { width: 58px; border-left: 1px solid #c8c8c8; display: flex; flex-direction: column; }
.rail a { height: 57px; display: flex; align-items: center; justify-content: center; flex: none; }
.rail svg { width: 30px; height: 30px; }
.red { color: #e34850; } .indigo { color: #6767ec; } .pink { color: #d83790; } .mag { color: #c038cc; } .violet { color: #9256d9; }
.teal { color: #1b959a; } .lime { color: #7cc93a; } .gold { color: #dfbf00; } .gold2 { color: #dcb92a; } .green { color: #3da74e; } .grey { color: #6e6e6e; }
.rail .active { background: #c135cd; color: #fff; }

.taskbar { height: 60px; background: linear-gradient(#2b6977, #225968); display: flex; align-items: center; color: #0a1d24; font-size: 14.500px; }
.weather { display: flex; align-items: center; gap: 3px; padding-left: 25px; width: 602px; line-height: 20px; }
.weather svg { width: 36px; height: 38px; stroke: none; margin-top: -8px; }
.weather text { fill: #fff; font-size: 14px; font-weight: 600; }
.weather span, .st span { display: block; width: max-content; }
.soft { color: #12323c; }
.apps { display: flex; height: 60px; align-items: center; }
.apps a { width: 55.150px; height: 48px; display: flex; align-items: center; justify-content: center; position: relative; }
.apps svg { width: 29px; height: 29px; stroke: none; }
.run::after { content: ""; position: absolute; bottom: 0; width: 8px; height: 4px; border-radius: 2px; background: #15353f; }
.apps .cur::after { content: ""; position: absolute; bottom: 0; width: 19px; height: 4px; border-radius: 2px; background: #27808f; }
.apps .cur { width: 48px; background: #95b3ba; border-radius: 5px; margin-left: 3px; }
.tray { display: flex; align-items: center; margin-left: auto; padding-right: 25px; line-height: 20px; }
.tray svg { stroke-width: 1.500; }
.up { width: 13px; height: 8px; margin-right: 27px; stroke-width: 2; }
.st { display: flex; flex-direction: column; align-items: center; }
.wifi { width: 20px; height: 16px; margin-left: 23px; }
.spk { width: 20px; height: 16px; margin-left: 10px; }
.bat { width: 20px; height: 18px; margin: 0 21px 0 10px; }
.end { align-items: flex-end; }
```
FILE: script.js
```js
// Spread each text run over its stated advance width, in pixels.
document.fonts.ready.then(() => {
  document.querySelectorAll('[data-w]').forEach((run) => {
    const range = document.createRange();
    range.selectNodeContents(run);
    const natural = range.getBoundingClientRect().width;
    run.style.letterSpacing = (run.dataset.w - natural) / run.textContent.length + 'px';
  });
});
```
